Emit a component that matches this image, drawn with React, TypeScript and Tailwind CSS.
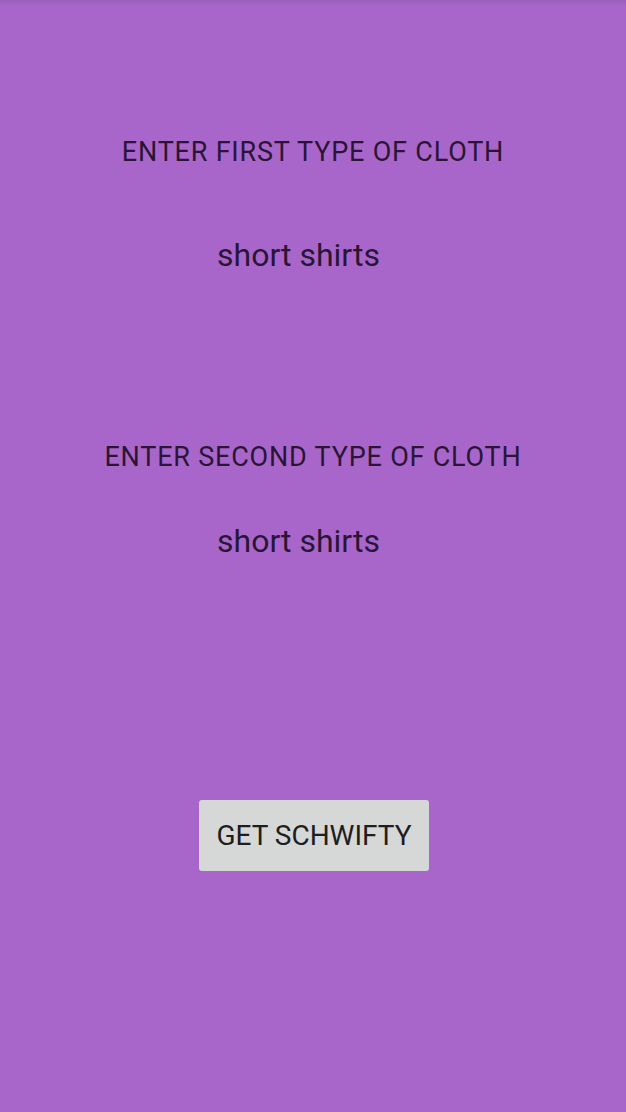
export default function App() {
    return (
        <div className="w-[626px] h-[1112px] bg-[#a866ca] flex flex-col items-center text-[#2a1535]" style={{ fontFamily: "Roboto, sans-serif" }}>
            <div className="w-full h-[6px] bg-gradient-to-b from-[#9c5fbd] to-[#a866ca]" />
            <div className="mt-[130px] h-[32px] leading-[32px] text-[27px] tracking-[0.8px] text-center">ENTER FIRST TYPE OF CLOTH</div>
            <div className="mt-[68px] h-[38px] leading-[38px] text-[32px] w-full pl-[217px]">short shirts</div>
            <div className="mt-[167px] h-[32px] leading-[32px] text-[27px] tracking-[0.8px] text-center">ENTER SECOND TYPE OF CLOTH</div>
            <div className="mt-[49px] h-[38px] leading-[38px] text-[32px] w-full pl-[217px]">short shirts</div>
            <button className="mt-[240px] ml-[2px] w-[230px] h-[71px] bg-[#d6d7d7] rounded-[3px] text-[28px] text-[#1e1e1e]">GET SCHWIFTY</button>
        </div>
    );
}
